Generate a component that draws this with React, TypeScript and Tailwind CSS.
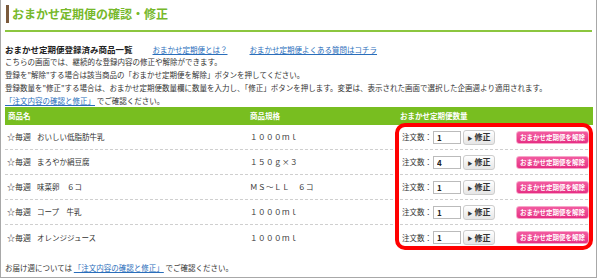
import React from 'react';

const ITEMS = [
  { name: 'おいしい低脂肪牛乳', spec: '１０００ｍｌ', qty: '1' },
  { name: 'まろやか絹豆腐', spec: '１５０ｇ×３', qty: '4' },
  { name: '味菜卵　６コ', spec: 'ＭＳ～ＬＬ　６コ', qty: '1' },
  { name: 'コープ　牛乳', spec: '１０００ｍｌ', qty: '1' },
  { name: 'オレンジジュース', spec: '１０００ｍｌ', qty: '1' },
];

function Row({ name, spec, qty, last }: { name: string; spec: string; qty: string; last: boolean }) {
  return (
    <div
      className={`flex items-center h-[25px] text-[7.5px] text-[#333] whitespace-nowrap ${
        last ? '' : 'border-b border-dashed border-[#cfcfcf]'
      }`}
    >
      <div className="w-[245px] pl-[2px] flex items-center">
        <span className="text-[8px] mr-[6px]">☆毎週</span>
        <span>{name}</span>
      </div>
      <div className="w-[145px] tracking-[0.5px]">{spec}</div>
      <div className="flex items-center pl-[7px]">
        <span className="w-[30px]">注文数：</span>
        <input
          readOnly
          value={qty}
          className="ml-[1px] w-[28px] h-[13px] border border-[#bbb] bg-white px-[3px] text-[8px] font-bold text-[#222] outline-none"
        />
        <button className="ml-[2px] w-[32px] h-[15px] rounded-[3px] border border-[#ccc] bg-gradient-to-b from-white to-[#e6e6e6] text-[8px] font-bold text-[#333] flex items-center justify-center gap-[2px] leading-none">
          <span className="text-[5px]">▶</span>修正
        </button>
        <button className="ml-[21px] w-[73px] h-[13px] rounded-[3px] border border-[#f7a6c8] bg-gradient-to-b from-[#f25aa0] to-[#e62e84] text-[6.5px] font-bold text-white leading-none">
          おまかせ定期便を解除
        </button>
      </div>
    </div>
  );
}

const LINE = 'h-[13px] leading-[13px] overflow-visible';

export default function App() {
  return (
    <div className="w-[600px] h-[280px] bg-white font-['Noto_Sans_CJK_JP',sans-serif] overflow-hidden">
      <div className="w-[597px] h-[278px] border-l border-r border-b border-[#a8a8a8] px-[4px] relative whitespace-nowrap">
        {/* Title */}
        <div className="pt-[5px] flex items-center h-[23px]">
          <div className="w-[3px] h-[18px] bg-[#7a5a3c] ml-[1px]" />
          <h1 className="ml-[3px] text-[12px] font-bold text-[#76b82a] leading-none">おまかせ定期便の確認・修正</h1>
        </div>
        <div className="mt-[7px] h-[2px] bg-[#8cc63f]" />

        {/* Intro */}
        <div className="mt-[12px] flex items-center h-[11px]">
          <h2 className="text-[8.5px] font-bold text-[#222] leading-none">おまかせ定期便登録済み商品一覧</h2>
          <a className="ml-[20px] text-[7.5px] text-[#2a6ebb] underline leading-none">おまかせ定期便とは？</a>
          <a className="ml-[22px] text-[7.5px] text-[#2a6ebb] underline leading-none">おまかせ定期便よくある質問はコチラ</a>
        </div>
        <div className="h-[52px] text-[7.5px] text-[#333]">
          <p className={LINE}>こちらの画面では、継続的な登録内容の修正や解除ができます。</p>
          <p className={LINE}>登録を"解除"する場合は該当商品の「おまかせ定期便を解除」ボタンを押してください。</p>
          <p className={LINE}>登録数量を"修正"する場合は、おまかせ定期便数量欄に数量を入力し、「修正」ボタンを押します。変更は、表示された画面で選択した企画週より適用されます。</p>
          <p className={LINE}>
            <a className="text-[#2a6ebb] underline">「注文内容の確認と修正」</a> でご確認ください。
          </p>
        </div>

        {/* Table */}
        <div className="w-[588px]">
          <div className="flex items-center h-[18px] bg-[#78be20] text-white text-[7.5px] font-bold">
            <div className="w-[245px] pl-[3px]">商品名</div>
            <div className="w-[145px]">商品規格</div>
            <div className="pl-[5px]">おまかせ定期便数量</div>
          </div>
          {ITEMS.map((it, i) => (
            <Row key={i} {...it} last={i === ITEMS.length - 1} />
          ))}
        </div>

        {/* highlight annotation */}
        <div className="absolute left-[394px] top-[123px] w-[198px] h-[127px] border-[4px] border-[#ff0000] rounded-[10px] pointer-events-none" />

        <p className="mt-[12px] h-[12px] leading-[12px] text-[7.5px] text-[#333]">
          お届け週については <a className="text-[#2a6ebb] underline">「注文内容の確認と修正」</a> でご確認ください。
        </p>
      </div>
    </div>
  );
}
